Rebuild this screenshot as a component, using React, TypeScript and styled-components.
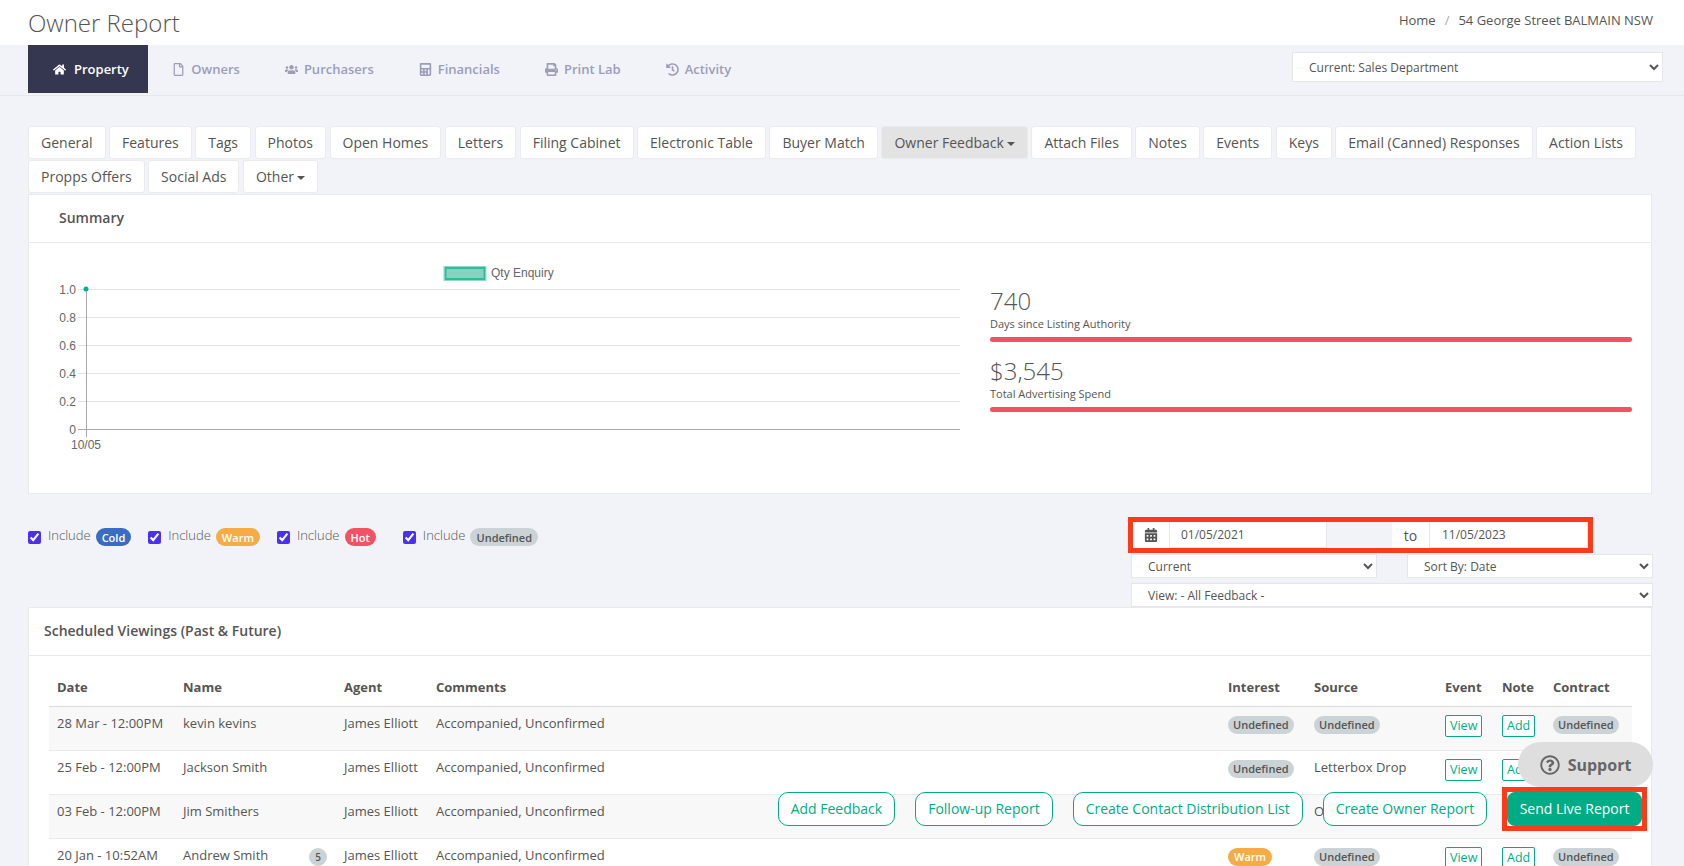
import React from 'react';
import styled, { createGlobalStyle } from 'styled-components';
import {
  FaHome,
  FaRegFile,
  FaUsers,
  FaCalculator,
  FaPrint,
  FaHistory,
  FaCalendarAlt,
  FaRegQuestionCircle,
} from 'react-icons/fa';

const GlobalStyle = createGlobalStyle`
  html, body {
    margin: 0;
    padding: 0;
    background: #f1f3f8;
    font-family: "Open Sans", "Liberation Sans", sans-serif;
    color: #676a6c;
  }
  * { box-sizing: border-box; }
`;

const Page = styled.div`
  position: relative;
  width: 1684px;
  height: 866px;
  overflow: hidden;
  background: #f1f3f8;
`;

// top white strip
const TitleBar = styled.header`
  height: 45px;
  background: #fff;
  display: flex;
  align-items: center;
  justify-content: space-between;
  padding: 0 31px 0 28px;
`;
const PageTitle = styled.h1`
  margin: 0;
  font-size: 24px;
  font-weight: 300;
  color: #555;
`;
const Breadcrumb = styled.div`
  display: flex;
  gap: 9px;
  font-size: 13px;
  color: #555;
  margin-top: -5px;
`;
const Slash = styled.span`
  color: #aaa;
`;

// nav band
const NavBand = styled.nav`
  height: 51px;
  border-bottom: 1px solid #e4e6ec;
  display: flex;
  justify-content: space-between;
  padding: 0 21px 0 28px;
`;
const NavList = styled.div`
  display: flex;
  height: 48px;
`;
const NavItem = styled.a<{ $active?: boolean }>`
  display: flex;
  align-items: center;
  gap: ${(p) => (p.$active ? '8px' : '6px')};
  padding: ${(p) => (p.$active ? '0 19px 0 25px' : '0 22.5px')};
  margin-right: ${(p) => (p.$active ? '2px' : '0')};
  font-size: 13px;
  font-weight: 600;
  background: ${(p) => (p.$active ? '#353750' : 'transparent')};
  color: ${(p) => (p.$active ? '#fff' : '#9b9db9')};
`;
const Select = styled.select<{ $width?: number }>`
  width: ${(p) => (p.$width ? `${p.$width}px` : '100%')};
  background-color: #fff;
  border: 1px solid #e4e6ec;
  border-radius: 0;
  font-family: inherit;
  font-size: 12px;
  color: #555;
  padding: 0 12px;
`;
const DeptSelect = styled(Select)`
  height: 30px;
  margin-top: 7px;
`;

// tabs
const Tabs = styled.div`
  display: flex;
  flex-wrap: wrap;
  gap: 1px 3.5px;
  padding: 30px 31px 0 28px;
`;
const Tab = styled.a<{ $active?: boolean }>`
  display: flex;
  align-items: center;
  gap: 3px;
  height: 33px;
  padding: 0 12px;
  font-size: 14px;
  border: 1px solid #e9ebf0;
  border-radius: 3px;
  color: #555;
  background: ${(p) => (p.$active ? '#e3e3e3' : '#fff')};
`;
const Caret = styled.span`
  border-top: 4px solid #555;
  border-left: 4px solid transparent;
  border-right: 4px solid transparent;
  margin-top: 2px;
`;

const Content = styled.main`
  padding: 1px 32px 0 28px;
`;
const Card = styled.section`
  background: #fff;
  border: 1px solid #e7e9ee;
`;
const CardHeader = styled.div<{ $left: number }>`
  height: 48px;
  display: flex;
  align-items: center;
  padding: 0 0 3px ${(p) => p.$left}px;
  border-bottom: 1px solid #e7e9ee;
  font-size: 14px;
  font-weight: 600;
  color: #555;
`;
const SummaryBody = styled.div`
  display: flex;
  height: 250px;
`;
const ChartSvg = styled.svg`
  width: 940px;
  height: 210px;
  flex: none;
  text {
    font-family: "Liberation Sans", sans-serif;
    font-size: 12px;
    fill: #666;
  }
`;
const Stats = styled.div`
  width: 642px;
  margin-left: 21px;
  padding-top: 41px;
  display: flex;
  flex-direction: column;
  gap: 12px;
`;
const StatValue = styled.div`
  height: 33px;
  line-height: 33px;
  font-size: 24px;
  font-weight: 300;
  color: #555;
`;
const StatLabel = styled.div`
  height: 14px;
  line-height: 14px;
  font-size: 11px;
  color: #555;
`;
const StatBar = styled.div`
  height: 5px;
  margin-top: 6px;
  border-radius: 3px;
  background: #f15364;
`;

// checkboxes + date filters
const Filters = styled.div`
  height: 113px;
  display: flex;
  justify-content: space-between;
  align-items: flex-start;
`;
const Includes = styled.div`
  display: flex;
  gap: 17px;
  padding-top: 34px;
`;
const Include = styled.label<{ $extra?: number }>`
  display: flex;
  align-items: center;
  gap: 5px;
  height: 18px;
  margin-right: ${(p) => p.$extra || 0}px;
`;
const IncludeText = styled.span`
  font-size: 13px;
  font-weight: 300;
  color: #555;
  margin-bottom: 4px;
`;
const Check = styled.input`
  width: 13px;
  height: 13px;
  margin: 0 2px 0 0;
  accent-color: #4c2ff0;
`;
const Badge = styled.span<{ $bg: string; $fg?: string; $pad?: number }>`
  display: inline-flex;
  align-items: center;
  height: 18px;
  padding: 0 ${(p) => p.$pad ?? 6}px;
  border-radius: 9px;
  font-size: 11px;
  font-weight: 600;
  background: ${(p) => p.$bg};
  color: ${(p) => p.$fg || '#fff'};
`;
const FilterForm = styled.div`
  width: 522px;
  margin-right: -1px;
  padding-top: 28px;
  display: flex;
  flex-direction: column;
`;
const DateRange = styled.div`
  width: 455px;
  height: 26px;
  margin-left: 2px;
  outline: 5px solid #ff3a1a;
  display: flex;
`;
const AddonCell = styled.div<{ $width: number }>`
  width: ${(p) => p.$width}px;
  background: #fff;
  border-right: 1px solid #e4e6ec;
  display: flex;
  align-items: center;
  justify-content: center;
  font-size: 14px;
  color: #555;
`;
const DateInput = styled.div<{ $width: number; $left: number }>`
  width: ${(p) => p.$width}px;
  background: #fff;
  border-right: 1px solid #e4e6ec;
  border-bottom: 1px solid #e4e6ec;
  display: flex;
  align-items: center;
  padding-left: ${(p) => p.$left}px;
  font-size: 12px;
  color: #555;
`;
const DateGap = styled.div`
  width: 65px;
`;
const SelectRow = styled.div`
  display: flex;
  justify-content: space-between;
  margin: 6px 0 5px;
`;
const FilterSelect = styled(Select)`
  height: 24px;
`;

// table
const TableWrap = styled.div`
  padding: 0 19px 0 20px;
`;
const Table = styled.table`
  width: 100%;
  table-layout: fixed;
  border-collapse: collapse;
  font-size: 13px;
  color: #555;
`;
const Th = styled.th<{ $width?: number }>`
  width: ${(p) => (p.$width ? `${p.$width}px` : 'auto')};
  height: 50px;
  padding: 0 8px 10px;
  text-align: left;
  vertical-align: bottom;
  font-size: 13px;
  font-weight: 700;
  border-bottom: 1px solid #ddd;
`;
const Row = styled.tr<{ $striped?: boolean }>`
  height: 44px;
  background: ${(p) => (p.$striped ? '#f8f8f8' : '#fff')};
  border-bottom: 1px solid #e7eaec;
`;
const Td = styled.td`
  padding: 8px 8px 0;
  line-height: 17px;
  vertical-align: top;
  white-space: nowrap;
  ${Badge} {
    margin-top: 1px;
    vertical-align: top;
  }
`;
const NameCell = styled.div`
  display: flex;
  justify-content: space-between;
`;
const CountBadge = styled.span`
  width: 18px;
  height: 18px;
  margin: 1px 1px 0 0;
  border-radius: 50%;
  background: #ccd3d6;
  font-size: 10px;
  font-weight: 600;
  line-height: 18px;
  text-align: center;
`;
const OutlineBtn = styled.a`
  display: inline-block;
  height: 22px;
  padding: 0 4px;
  vertical-align: top;
  line-height: 20px;
  font-size: 12.5px;
  color: #00ac85;
  border: 1px solid #00ac85;
  border-radius: 2px;
  background: #fff;
`;

// floating bottom buttons
const ActionBar = styled.div`
  position: absolute;
  right: 42px;
  top: 792px;
  display: flex;
  gap: 20px;
`;
const ActionBtn = styled.a<{ $primary?: boolean }>`
  display: flex;
  align-items: center;
  height: 34px;
  padding: 0 ${(p) => (p.$primary ? '11.5px' : '12px')} 2px;
  font-size: 14px;
  border: 1px solid #00ac85;
  border-radius: ${(p) => (p.$primary ? '8px' : '10px')};
  color: ${(p) => (p.$primary ? '#fff' : '#00ac85')};
  background: ${(p) => (p.$primary ? '#00ac85' : '#fff')};
`;
const Highlight = styled.div`
  background: #fff;
  outline: 5px solid #ff3a1a;
`;
const Support = styled.div`
  position: absolute;
  left: 1518px;
  top: 742px;
  width: 135px;
  height: 45px;
  border-radius: 23px;
  background: #dedede;
  color: #666;
  display: flex;
  align-items: center;
  justify-content: center;
  gap: 8px;
  font-size: 16px;
  font-weight: 700;
`;

const navItems = [
  { label: 'Property', icon: <FaHome />, active: true },
  { label: 'Owners', icon: <FaRegFile /> },
  { label: 'Purchasers', icon: <FaUsers /> },
  { label: 'Financials', icon: <FaCalculator /> },
  { label: 'Print Lab', icon: <FaPrint /> },
  { label: 'Activity', icon: <FaHistory /> },
];

const tabs = [
  'General', 'Features', 'Tags', 'Photos', 'Open Homes', 'Letters', 'Filing Cabinet',
  'Electronic Table', 'Buyer Match', 'Owner Feedback', 'Attach Files', 'Notes', 'Events',
  'Keys', 'Email (Canned) Responses', 'Action Lists', 'Propps Offers', 'Social Ads', 'Other',
];

const UNDEF = '#ccd3d6';
const undefinedBadge = (
  <Badge $bg={UNDEF} $fg="#555" $pad={5}>
    Undefined
  </Badge>
);

const rows = [
  { date: '28 Mar - 12:00PM', name: 'kevin kevins', interest: undefinedBadge, source: undefinedBadge },
  { date: '25 Feb - 12:00PM', name: 'Jackson Smith', interest: undefinedBadge, source: 'Letterbox Drop' },
  { date: '03 Feb - 12:00PM', name: 'Jim Smithers', interest: undefinedBadge, source: 'Open Home' },
  {
    date: '20 Jan - 10:52AM',
    name: 'Andrew Smith',
    count: 5,
    interest: <Badge $bg="#f5ac45">Warm</Badge>,
    source: undefinedBadge,
  },
];

const ticks = ['1.0', '0.8', '0.6', '0.4', '0.2', '0'];
const includes = [
  { badge: <Badge $bg="#3b6cc4">Cold</Badge> },
  { badge: <Badge $bg="#f5ac45">Warm</Badge> },
  { badge: <Badge $bg="#f15364">Hot</Badge>, extra: 10 },
  { badge: <Badge $bg={UNDEF} $fg="#555">Undefined</Badge> },
];

const Chart = () => (
  <ChartSvg viewBox="0 0 940 210">
    <rect x="415" y="23.5" width="42" height="14" fill="none" stroke="#8fdcc8" />
    <rect x="416.5" y="25" width="39" height="11" fill="#82d5bf" stroke="#2fbb99" strokeWidth="2" />
    <text x="462" y="34">Qty Enquiry</text>
    {ticks.map((t, i) => {
      const y = 46.5 + i * 28;
      return (
        <g key={t}>
          <line x1="49" x2="931" y1={y} y2={y} stroke={i === 5 ? '#a8a8a8' : '#e3e3e3'} />
          <text x="47" y={y + 4} textAnchor="end">{t}</text>
        </g>
      );
    })}
    <line x1="57.5" x2="57.5" y1="46" y2="194" stroke="#a8a8a8" />
    <circle cx="57" cy="46" r="2.5" fill="#00b28a" />
    <text x="57" y="206" textAnchor="middle">10/05</text>
  </ChartSvg>
);

export default function App() {
  return (
    <Page>
      <GlobalStyle />
      <TitleBar>
        <PageTitle>Owner Report</PageTitle>
        <Breadcrumb>
          <span>Home</span>
          <Slash>/</Slash>
          <span>54 George Street BALMAIN NSW</span>
        </Breadcrumb>
      </TitleBar>

      <NavBand>
        <NavList>
          {navItems.map((n) => (
            <NavItem key={n.label} $active={n.active}>
              {n.icon}
              {n.label}
            </NavItem>
          ))}
        </NavList>
        <DeptSelect $width={371} defaultValue="sales">
          <option value="sales">Current: Sales Department</option>
        </DeptSelect>
      </NavBand>

      <Tabs>
        {tabs.map((t) => (
          <Tab key={t} $active={t === 'Owner Feedback'}>
            {t}
            {(t === 'Owner Feedback' || t === 'Other') && <Caret />}
          </Tab>
        ))}
      </Tabs>

      <Content>
        <Card>
          <CardHeader $left={30}>Summary</CardHeader>
          <SummaryBody>
            <Chart />
            <Stats>
              <div>
                <StatValue>740</StatValue>
                <StatLabel>Days since Listing Authority</StatLabel>
                <StatBar />
              </div>
              <div>
                <StatValue>$3,545</StatValue>
                <StatLabel>Total Advertising Spend</StatLabel>
                <StatBar />
              </div>
            </Stats>
          </SummaryBody>
        </Card>

        <Filters>
          <Includes>
            {includes.map((inc, i) => (
              <Include key={i} $extra={inc.extra}>
                <Check type="checkbox" defaultChecked />
                <IncludeText>Include</IncludeText>
                {inc.badge}
              </Include>
            ))}
          </Includes>
          <FilterForm>
            <DateRange>
              <AddonCell $width={37}>
                <FaCalendarAlt />
              </AddonCell>
              <DateInput $width={157} $left={11}>01/05/2021</DateInput>
              <DateGap />
              <AddonCell $width={38}>to</AddonCell>
              <DateInput $width={158} $left={12}>11/05/2023</DateInput>
            </DateRange>
            <SelectRow>
              <FilterSelect $width={246} defaultValue="current">
                <option value="current">Current</option>
              </FilterSelect>
              <FilterSelect $width={246} defaultValue="date">
                <option value="date">Sort By: Date</option>
              </FilterSelect>
            </SelectRow>
            <FilterSelect defaultValue="all">
              <option value="all">View: - All Feedback -</option>
            </FilterSelect>
          </FilterForm>
        </Filters>

        <Card>
          <CardHeader $left={15}>Scheduled Viewings (Past &amp; Future)</CardHeader>
          <TableWrap>
            <Table>
              <thead>
                <tr>
                  <Th $width={126}>Date</Th>
                  <Th $width={161}>Name</Th>
                  <Th $width={92}>Agent</Th>
                  <Th>Comments</Th>
                  <Th $width={86}>Interest</Th>
                  <Th $width={131}>Source</Th>
                  <Th $width={57}>Event</Th>
                  <Th $width={51}>Note</Th>
                  <Th $width={87}>Contract</Th>
                </tr>
              </thead>
              <tbody>
                {rows.map((r, i) => (
                  <Row key={r.date} $striped={i % 2 === 0}>
                    <Td>{r.date}</Td>
                    <Td>
                      <NameCell>
                        {r.name}
                        {r.count && <CountBadge>{r.count}</CountBadge>}
                      </NameCell>
                    </Td>
                    <Td>James Elliott</Td>
                    <Td>Accompanied, Unconfirmed</Td>
                    <Td>{r.interest}</Td>
                    <Td>{r.source}</Td>
                    <Td><OutlineBtn>View</OutlineBtn></Td>
                    <Td><OutlineBtn>Add</OutlineBtn></Td>
                    <Td>{undefinedBadge}</Td>
                  </Row>
                ))}
              </tbody>
            </Table>
          </TableWrap>
        </Card>
      </Content>

      <Support>
        <FaRegQuestionCircle size={20} />
        Support
      </Support>
      <ActionBar>
        <ActionBtn>Add Feedback</ActionBtn>
        <ActionBtn>Follow-up Report</ActionBtn>
        <ActionBtn>Create Contact Distribution List</ActionBtn>
        <ActionBtn>Create Owner Report</ActionBtn>
        <Highlight>
          <ActionBtn $primary>Send Live Report</ActionBtn>
        </Highlight>
      </ActionBar>
    </Page>
  );
}
